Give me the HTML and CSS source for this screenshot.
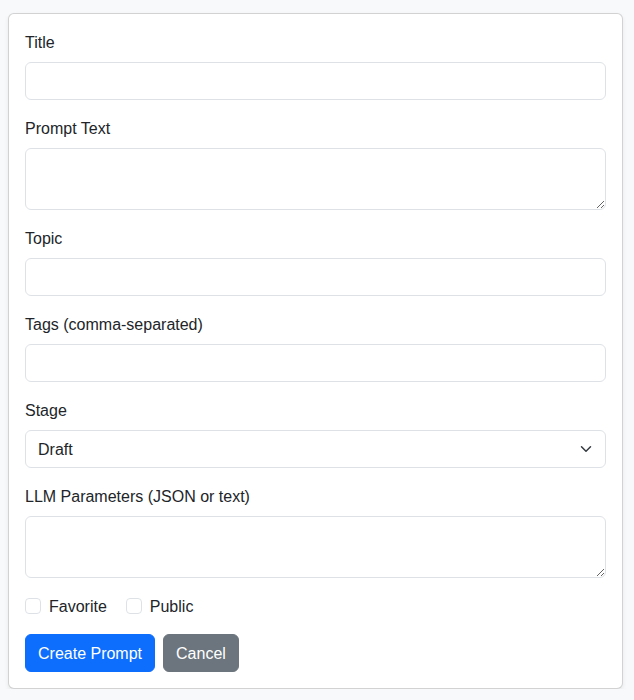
FILE: index.html
```html
<!DOCTYPE html>
<html lang="en">
<head>
<meta charset="utf-8">
<title>Create Prompt</title>
<link rel="stylesheet" href="styles.css">
</head>
<body>
<div class="card">
  <form class="card-body">
    <div class="field">
      <label class="form-label" for="title">Title</label>
      <input class="form-control" id="title" type="text">
    </div>
    <div class="field">
      <label class="form-label" for="text">Prompt Text</label>
      <textarea class="form-control" id="text" rows="2"></textarea>
    </div>
    <div class="field">
      <label class="form-label" for="topic">Topic</label>
      <input class="form-control" id="topic" type="text">
    </div>
    <div class="field">
      <label class="form-label" for="tags">Tags (comma-separated)</label>
      <input class="form-control" id="tags" type="text">
    </div>
    <div class="field">
      <label class="form-label" for="stage">Stage</label>
      <div class="select-wrap">
        <select class="form-select" id="stage">
          <option>Draft</option>
          <option>Review</option>
          <option>Final</option>
        </select>
        <svg class="chevron" width="16" height="12" viewBox="0 0 16 16" aria-hidden="true"><path fill="none" stroke="#343a40" stroke-linecap="round" stroke-linejoin="round" stroke-width="2" d="m2 5 6 6 6-6"/></svg>
      </div>
    </div>
    <div class="field">
      <label class="form-label" for="llm">LLM Parameters (JSON or text)</label>
      <textarea class="form-control" id="llm" rows="2"></textarea>
    </div>
    <div class="checks">
      <label class="form-check"><input type="checkbox" class="form-check-input"><span>Favorite</span></label>
      <label class="form-check"><input type="checkbox" class="form-check-input"><span>Public</span></label>
    </div>
    <div class="actions">
      <button type="submit" class="btn btn-primary">Create Prompt</button>
      <button type="button" class="btn btn-secondary">Cancel</button>
    </div>
  </form>
</div>
</body>
</html>
```

FILE: styles.css
```css
* { box-sizing: border-box; }
html, body { margin: 0; }
body {
  background: #f8f9fa;
  font-family: "Liberation Sans", Arial, sans-serif;
  font-size: 16px;
  line-height: 24px;
  color: #212529;
  padding: 13px 11px 0 8px;
}
.card {
  width: 615px;
  background: #fff;
  border: 1px solid rgba(0,0,0,0.175);
  border-radius: 6px;
  box-shadow: 0 2px 4px rgba(0,0,0,0.075);
}
.card-body {
  padding: 16px;
  margin: 0;
  display: flex;
  flex-direction: column;
}
.field { margin-bottom: 16px; display: flex; flex-direction: column; }
.form-label { display: block; padding-top: 1px; margin-bottom: 7px; }
.form-control, .form-select {
  display: block;
  width: 100%;
  padding: 7px 12px 5px;
  font: inherit;
  line-height: 24px;
  color: #212529;
  background: #fff;
  border: 1px solid #dee2e6;
  border-radius: 6px;
  margin: 0;
  outline: none;
}
input.form-control { height: 38px; }
textarea.form-control { height: 62px; resize: vertical; min-height: 38px; }
.select-wrap { position: relative; }
.form-select {
  appearance: none;
  -webkit-appearance: none;
  height: 38px;
  padding-right: 36px;
}
.chevron {
  position: absolute;
  right: 12px;
  top: 13px;
  pointer-events: none;
}
.checks { display: flex; margin-bottom: 16px; height: 24px; }
.form-check {
  display: flex;
  align-items: flex-start;
  margin-right: 19px;
  height: 24px;
}
.form-check span { padding-top: 1px; line-height: 23px; }
.form-check-input {
  appearance: none;
  -webkit-appearance: none;
  width: 16px;
  height: 16px;
  margin: 4px 8px 0 0;
  border: 1px solid #dee2e6;
  border-radius: 4px;
  background: #fff;
}
.actions { display: flex; gap: 8px; }
.btn {
  font: inherit;
  line-height: 24px;
  padding: 7px 12px 5px;
  height: 38px;
  border: 1px solid transparent;
  border-radius: 6px;
  color: #fff;
  cursor: pointer;
}
.btn-primary { background: #0d6efd; border-color: #0d6efd; }
.btn-secondary { background: #6c757d; border-color: #6c757d; }
```
